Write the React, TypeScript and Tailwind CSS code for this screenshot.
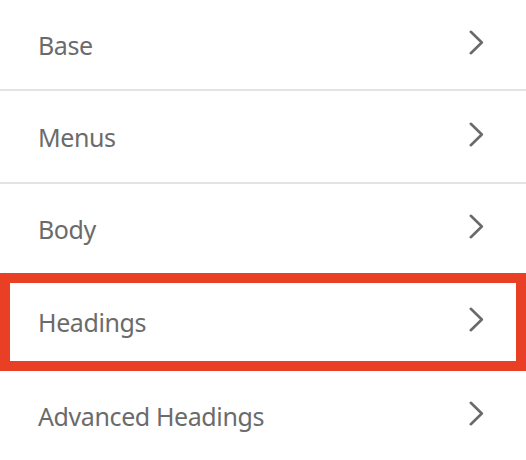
const items = ['Base', 'Menus', 'Body', 'Headings', 'Advanced Headings'];

function Chevron() {
  return (
    <svg width="15" height="25" viewBox="0 0 15 25" fill="none" className="mb-[5px] shrink-0">
      <polyline
        points="1.8,1.8 12.8,12.5 1.8,23.2"
        stroke="#6a6a6a"
        strokeWidth="2.6"
        strokeLinecap="round"
        strokeLinejoin="round"
      />
    </svg>
  );
}

function Row({ label, active, divider, height }: { label: string; active?: boolean; divider?: boolean; height: string }) {
  return (
    <div
      className={
        active
          ? `flex items-center justify-between ${height} border-[10px] border-[#e94025] pl-[28px] pr-[32px]`
          : `flex items-center justify-between ${height} pl-[38px] pr-[42px] ${divider ? 'border-b-2 border-[#e3e3e3]' : ''}`
      }
    >
      <span className="text-[25px] tracking-[-0.4px] leading-none text-[#6b6b6b] font-['Noto_Sans',sans-serif] pt-[1px]">
        {label}
      </span>
      <Chevron />
    </div>
  );
}

export default function App() {
  return (
    <div className="w-[526px] h-[460px] bg-white overflow-hidden flex flex-col">
      <Row label={items[0]} divider height="h-[91px]" />
      <Row label={items[1]} divider height="h-[93px]" />
      <Row label={items[2]} height="h-[89px]" />
      <Row label={items[3]} active height="h-[98px]" />
      <Row label={items[4]} height="h-[89px]" />
    </div>
  );
}
